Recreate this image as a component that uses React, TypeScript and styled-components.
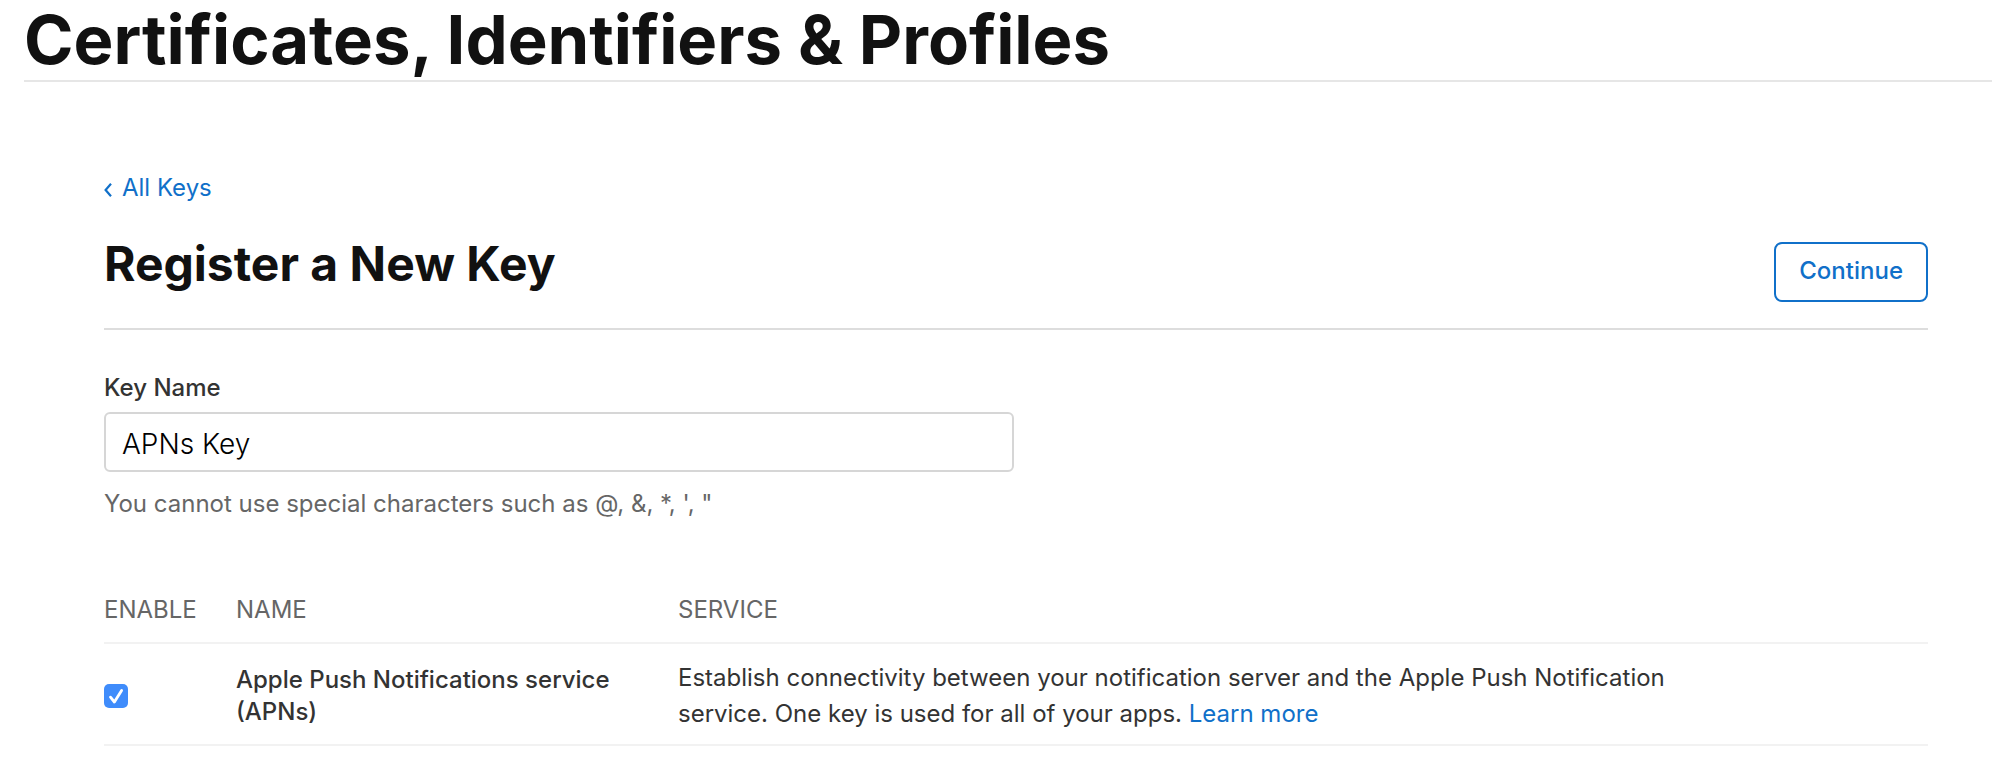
import React, { useState } from "react";
import styled, { createGlobalStyle } from "styled-components";

const GlobalStyle = createGlobalStyle`
  *, *::before, *::after { box-sizing: border-box; }
  body {
    margin: 0;
    background: #fff;
    color: #333;
    font-family: Inter, "Liberation Sans", sans-serif;
    font-size: 24px;
    line-height: 36px;
  }
`;

const Header = styled.header`
  margin-left: 24px;
  border-bottom: 2px solid #e6e6e6;
`;

const SiteTitle = styled.h1`
  margin: 0;
  color: #111;
  font-size: 67px;
  font-weight: 700;
  line-height: 80px;
  white-space: nowrap;
`;

const Main = styled.main`
  padding: 88px 64px 0 104px;
`;

const TextLink = styled.a`
  color: #1070c9;
  text-decoration: none;
`;

const BackLink = styled(TextLink)`
  display: inline-flex;
  align-items: center;
  gap: 10px;
`;

const ChevronIcon = styled.svg`
  width: 8px;
  height: 14px;
  margin-top: 4px;
`;

const TitleBar = styled.div`
  display: flex;
  justify-content: space-between;
  align-items: flex-start;
  margin-top: 31px;
  padding-bottom: 26px;
  border-bottom: 2px solid #ddd;
`;

const PageTitle = styled.h2`
  margin: 0;
  padding-top: 4px;
  color: #111;
  font-size: 48px;
  font-weight: 700;
  line-height: 44px;
`;

const ContinueButton = styled.button`
  height: 60px;
  margin-top: 4px;
  padding: 0 23px 2px;
  border: 2px solid #1070c9;
  border-radius: 8px;
  background: #fff;
  color: #1070c9;
  font: inherit;
  font-weight: 500;
`;

const Field = styled.div`
  display: flex;
  flex-direction: column;
  width: calc(50% - 2px);
  margin-top: 40px;
`;

const FieldLabel = styled.label`
  font-weight: 500;
`;

const TextInput = styled.input`
  height: 60px;
  margin: 6px 0 14px;
  padding: 4px 16px 0;
  border: 2px solid #d6d6d6;
  border-radius: 6px;
  background: #fff;
  color: #000;
  font: inherit;
  font-size: 28px;
  font-weight: 300;
`;

const Hint = styled.span`
  color: #666;
`;

const ServiceTable = styled.table`
  width: 100%;
  margin-top: 70px;
  border-collapse: collapse;
  table-layout: fixed;
`;

const HeadCell = styled.th<{ $width?: string }>`
  width: ${(p) => p.$width ?? "auto"};
  padding: 0 0 14px;
  border-bottom: 2px solid #f2f2f2;
  color: #666;
  font-weight: 400;
  text-align: left;
`;

const Cell = styled.td<{ $strong?: boolean }>`
  padding: 16px 0 12px;
  border-bottom: 2px solid #f2f2f2;
  font-weight: ${(p) => (p.$strong ? 500 : 400)};
  line-height: ${(p) => (p.$strong ? 32 : 36)}px;
  vertical-align: middle;
`;

const ServiceText = styled.div`
  max-width: 1040px;
`;

const CheckboxBox = styled.div`
  display: grid;
  width: 24px;
  & > * { grid-area: 1 / 1; }
`;

const Checkbox = styled.input`
  display: block;
  width: 24px;
  height: 24px;
  margin: 0;
  appearance: none;
  border-radius: 5px;
  border: 1px solid #b5b5b5;
  background: #fff;
  &:checked {
    border: 0;
    background: #3f8cfb;
  }
`;

const CheckMark = styled.svg`
  width: 24px;
  height: 24px;
  pointer-events: none;
`;

export default function App() {
  const [keyName, setKeyName] = useState("APNs Key");
  const [enabled, setEnabled] = useState(true);

  return (
    <>
      <GlobalStyle />
      <Header>
        <SiteTitle>Certificates, Identifiers &amp; Profiles</SiteTitle>
      </Header>
      <Main>
        <BackLink href="#keys">
          <ChevronIcon viewBox="0 0 8 14" aria-hidden="true">
            <path d="M7 0.8 1.6 7 7 13.2" fill="none" stroke="currentColor" strokeWidth="2.2" />
          </ChevronIcon>
          All Keys
        </BackLink>
        <TitleBar>
          <PageTitle>Register a New Key</PageTitle>
          <ContinueButton type="button">Continue</ContinueButton>
        </TitleBar>
        <Field>
          <FieldLabel htmlFor="key-name">Key Name</FieldLabel>
          <TextInput
            id="key-name"
            type="text"
            value={keyName}
            aria-describedby="key-hint"
            onChange={(e) => setKeyName(e.target.value)}
          />
          <Hint id="key-hint">You cannot use special characters such as @, &amp;, *, ', "</Hint>
        </Field>
        <ServiceTable>
          <thead>
            <tr>
              <HeadCell $width="132px">ENABLE</HeadCell>
              <HeadCell $width="442px">NAME</HeadCell>
              <HeadCell>SERVICE</HeadCell>
            </tr>
          </thead>
          <tbody>
            <tr>
              <Cell>
                <CheckboxBox>
                  <Checkbox
                    id="apns"
                    type="checkbox"
                    checked={enabled}
                    onChange={(e) => setEnabled(e.target.checked)}
                  />
                  {enabled && (
                    <CheckMark viewBox="0 0 24 24" aria-hidden="true">
                      <path
                        d="M6.5 13.2 10.4 18 17.6 6.4"
                        fill="none"
                        stroke="#fff"
                        strokeWidth="2.8"
                        strokeLinecap="round"
                        strokeLinejoin="round"
                      />
                    </CheckMark>
                  )}
                </CheckboxBox>
              </Cell>
              <Cell $strong>
                <label htmlFor="apns">
                  Apple Push Notifications service
                  <br />
                  (APNs)
                </label>
              </Cell>
              <Cell>
                <ServiceText>
                  Establish connectivity between your notification server and the Apple Push Notification
                  service. One key is used for all of your apps. <TextLink href="#learn-more">Learn more</TextLink>
                </ServiceText>
              </Cell>
            </tr>
          </tbody>
        </ServiceTable>
      </Main>
    </>
  );
}
